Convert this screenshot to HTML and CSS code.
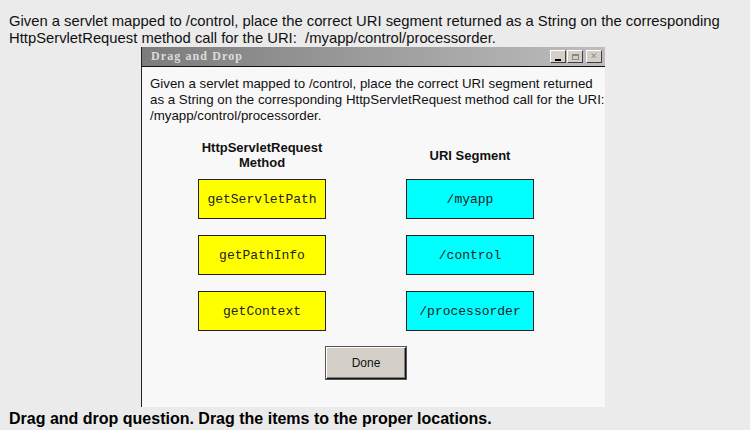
FILE: index.html
```html
<!DOCTYPE html>
<html lang="en">
<head>
    <meta charset="UTF-8">
    <meta name="viewport" content="width=device-width, initial-scale=1.0">
    <title>Drag and Drop</title>
    <link rel="stylesheet" href="styles.css">
</head>
<body>
    <p class="question">Given a servlet mapped to /control, place the correct URI segment returned as a String on the corresponding HttpServletRequest method call for the URI:&nbsp; /myapp/control/processorder.</p>

    <div class="window">
        <div class="titlebar">
            <span class="title">Drag and Drop</span>
            <div class="controls">
                <span class="ctl ctl-min"><i></i></span>
                <span class="ctl ctl-max"><i></i></span>
                <span class="ctl ctl-close">&#x2715;</span>
            </div>
        </div>
        <div class="content">
            <p class="prompt">Given a servlet mapped to /control, place the correct URI segment returned as a String on the corresponding HttpServletRequest method call for the URI: /myapp/control/processorder.</p>
            <div class="board">
                <div class="head">HttpServletRequest<br>Method</div>
                <div class="head">URI Segment</div>
                <div class="item method">getServletPath</div>
                <div class="item segment">/myapp</div>
                <div class="item method">getPathInfo</div>
                <div class="item segment">/control</div>
                <div class="item method">getContext</div>
                <div class="item segment">/processorder</div>
            </div>
            <div class="actions">
                <button class="done">Done</button>
            </div>
        </div>
    </div>

    <p class="hint">Drag and drop question. Drag the items to the proper locations.</p>
</body>
</html>
```
FILE: styles.css
```css
body {
    margin: 0;
    background-color: #ebebeb;
    font-family: "Liberation Sans", Arial, sans-serif;
    color: #111;
}
.question {
    margin: 0;
    padding: 13px 0 0 9px;
    font-size: 14.8px;
    line-height: 17px;
    width: 730px;
}
.window {
    margin: 0 0 0 141px;
    width: 464px;
    height: 360px;
    border-left: 1px solid #222;
    background: #f8f8f8;
    box-sizing: border-box;
}
.titlebar {
    height: 19px;
    border-bottom: 1px solid #111;
    background: linear-gradient(to right, #7c7c7c, #bdbdbd);
    display: flex;
    align-items: center;
    justify-content: space-between;
}
.title {
    font-family: "Liberation Serif", serif;
    font-weight: bold;
    font-size: 12px;
    letter-spacing: 1.1px;
    color: #dcdcdc;
    padding-left: 9px;
}
.controls {
    display: flex;
    gap: 1px;
    padding-right: 3px;
}
.ctl {
    width: 14px;
    height: 11px;
    background: #d4d0c8;
    border: 1px solid;
    border-color: #fff #404040 #404040 #fff;
    display: flex;
    align-items: center;
    justify-content: center;
    font-size: 9px;
    color: #909090;
    line-height: 1;
}
.ctl-close {
    margin-left: 2px;
}
.ctl-min i {
    width: 6px;
    height: 2px;
    background: #000;
    margin-top: 6px;
}
.ctl-max i {
    width: 7px;
    height: 6px;
    border: 1px solid #888;
    border-top-width: 2px;
    box-sizing: border-box;
}
.content {
    padding: 9px 8px 0 8px;
}
.prompt {
    margin: 0;
    font-size: 13.3px;
    line-height: 16px;
    width: 456px;
    color: #111;
}
.board {
    display: grid;
    grid-template-columns: 128px 128px;
    column-gap: 80px;
    row-gap: 16px;
    margin: 16px 0 0 48px;
}
.head {
    font-weight: bold;
    font-size: 13px;
    line-height: 15px;
    text-align: center;
    align-self: center;
    margin-bottom: -7px;
}
.item {
    height: 40px;
    border: 1px solid #222;
    box-sizing: border-box;
    display: flex;
    align-items: center;
    justify-content: center;
    font-family: "Liberation Mono", "Courier New", monospace;
    font-size: 13px;
    color: #222;
}
.method {
    background: #ffff00;
}
.segment {
    background: #00ffff;
}
.actions {
    display: flex;
    margin: 16px 0 0 176px;
}
.done {
    width: 80px;
    height: 32px;
    background: #d4d0c8;
    border: 1px solid;
    border-color: #fff #111 #111 #fff;
    box-shadow: inset -1px -1px 0 #808080, 0 0 0 1px #555;
    font-family: "Liberation Sans", Arial, sans-serif;
    font-size: 12px;
    color: #111;
    padding: 0;
}
.hint {
    margin: 0;
    padding: 2px 0 0 9px;
    font-size: 16px;
    line-height: 20px;
    font-weight: bold;
    color: #000;
}
```
